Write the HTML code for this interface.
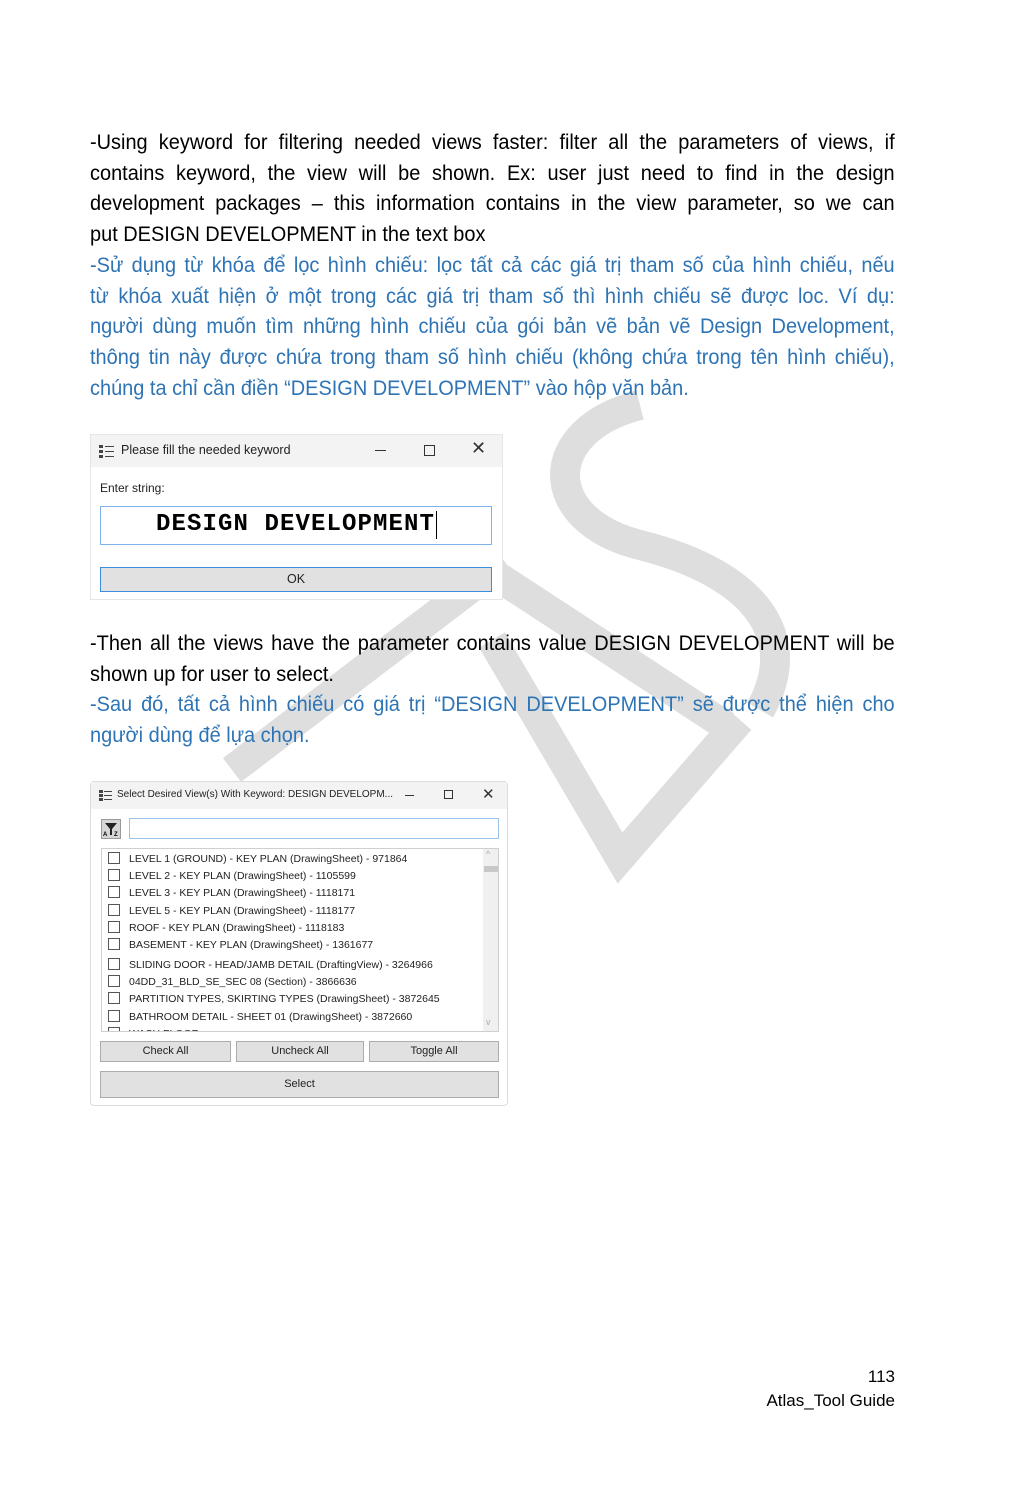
<!DOCTYPE html>
<html><head><meta charset="utf-8"><style>
*{margin:0;padding:0;box-sizing:border-box}
body{width:1021px;height:1499px;background:#fff;position:relative;overflow:hidden;font-family:"Liberation Sans",sans-serif;color:#000}
.wm{position:absolute;left:0;top:0;z-index:0}
.p{position:absolute;left:90px;width:847px;transform:scaleX(0.95);transform-origin:0 0;font-size:21px;line-height:30.7px;z-index:2}
.p div{text-align:justify;text-align-last:justify}
.p div.l{text-align-last:left}
.b{color:#2e74b5}
.dlg{position:absolute;background:#fff;z-index:1;border:1px solid #d8d8d8;font-size:12px;color:#222}
.tb{position:absolute;left:0;right:0;top:0;background:#f3f3f3}
.ab{position:absolute}
.btn{position:absolute;background:#e1e1e1;border:1px solid #adadad;text-align:center;font-size:11px;color:#222}
.row{position:absolute;left:6px;font-size:10.5px;white-space:nowrap;color:#222}
.row i{display:inline-block;width:12px;height:12px;border:1px solid #555;vertical-align:-2px;margin-right:9px;background:#fff}
</style></head><body>
<svg class="wm" width="1021" height="1499">
<g stroke="#dedede" stroke-width="30" fill="none" stroke-linecap="butt">
<path d="M232 770 L505 562"/>
<path d="M500 578 L726 726"/>
<path d="M492 640 L620 858 L740 720"/>
<path d="M640 405 C540 430 540 520 640 545 C760 575 800 640 760 710"/>
</g>
</svg>

<div class="p" style="top:128px">
<div>-Using keyword for filtering needed views faster: filter all the parameters of views, if</div>
<div>contains keyword, the view will be shown. Ex: user just need to find in the design</div>
<div>development packages – this information contains in the view parameter, so we can</div>
<div class="l">put DESIGN DEVELOPMENT in the text box</div>
<div class="b">-Sử dụng từ khóa để lọc hình chiếu: lọc tất cả các giá trị tham số của hình chiếu, nếu</div>
<div class="b">từ khóa xuất hiện ở một trong các giá trị tham số thì hình chiếu sẽ được loc. Ví dụ:</div>
<div class="b">người dùng muốn tìm những hình chiếu của gói bản vẽ bản vẽ Design Development,</div>
<div class="b">thông tin này được chứa trong tham số hình chiếu (không chứa trong tên hình chiếu),</div>
<div class="b l">chúng ta chỉ cần điền “DESIGN DEVELOPMENT” vào hộp văn bản.</div>
</div>

<div class="p" style="top:629px">
<div>-Then all the views have the parameter contains value DESIGN DEVELOPMENT will be</div>
<div class="l">shown up for user to select.</div>
<div class="b">-Sau đó, tất cả hình chiếu có giá trị “DESIGN DEVELOPMENT” sẽ được thể hiện cho</div>
<div class="b l">người dùng để lựa chọn.</div>
</div>

<!-- dialog 1 -->
<div class="dlg" style="left:90px;top:434px;width:413px;height:166px;border-color:#e6e6e6">
<div class="tb" style="height:32px"></div>
<svg class="ab" style="left:8px;top:9px" width="16" height="14"><g fill="#444"><rect x="0" y="1" width="4" height="3"/><rect x="0" y="6" width="4" height="3"/><rect x="0" y="11" width="4" height="3"/><rect x="6" y="2" width="9" height="1"/><rect x="6" y="7" width="9" height="1"/><rect x="6" y="12" width="9" height="1"/></g></svg>
<div class="ab" style="left:30px;top:8px;font-size:12.5px">Please fill the needed keyword</div>
<div class="ab" style="left:284px;top:15px;width:11px;height:1px;background:#333"></div>
<div class="ab" style="left:333px;top:10px;width:11px;height:11px;border:1px solid #333"></div>
<div class="ab" style="left:380px;top:3px;font-size:18px;color:#333">✕</div>
<div class="ab" style="left:9px;top:46px;font-size:12px">Enter string:</div>
<div class="ab" style="left:9px;top:71px;width:392px;height:39px;border:1px solid #7eb4ea"></div>
<div class="ab" style="left:65px;top:76px;font-family:'Liberation Mono',monospace;font-weight:bold;font-size:24px;color:#000;letter-spacing:1.1px;white-space:nowrap">DESIGN DEVELOPMENT</div>
<div class="ab" style="left:345px;top:76px;width:1px;height:28px;background:#000"></div>
<div class="btn" style="left:9px;top:132px;width:392px;height:25px;border:1px solid #3c8ce0;line-height:23px;font-size:12.5px">OK</div>
</div>

<!-- dialog 2 -->
<div class="dlg" style="left:90px;top:781px;width:418px;height:325px;border-color:#dcdcdc;border-radius:4px">
<div class="tb" style="height:27px"></div>
<svg class="ab" style="left:8px;top:7px" width="14" height="13"><g fill="#444"><rect x="0" y="1" width="4" height="3"/><rect x="0" y="5" width="4" height="3"/><rect x="0" y="9" width="4" height="3"/><rect x="5" y="2" width="8" height="1"/><rect x="5" y="6" width="8" height="1"/><rect x="5" y="10" width="8" height="1"/></g></svg>
<div class="ab" style="left:26px;top:7px;font-size:10px;white-space:nowrap">Select Desired View(s) With Keyword: DESIGN DEVELOPM...</div>
<div class="ab" style="left:314px;top:13px;width:9px;height:1px;background:#333"></div>
<div class="ab" style="left:353px;top:8px;width:9px;height:9px;border:1px solid #333"></div>
<div class="ab" style="left:391px;top:3px;font-size:15px;color:#333">✕</div>
<div class="ab" style="left:10px;top:37px;width:20px;height:20px;background:#d6d6d6;border:1px solid #999"></div>
<svg class="ab" style="left:12px;top:39px" width="16" height="16"><path d="M2 2 L14 2 L9 8 L9 14 L7 14 L7 8 Z" fill="#222"/><text x="0" y="15" font-size="6" font-family="Liberation Sans" font-weight="bold">A</text><text x="11" y="15" font-size="6" font-family="Liberation Sans" font-weight="bold">Z</text></svg>
<div class="ab" style="left:38px;top:36px;width:370px;height:21px;border:1px solid #9cc3ea"></div>
<div class="ab" style="left:10px;top:66px;width:398px;height:184px;border:1px solid #cfcfcf;overflow:hidden">
<div class="ab" style="left:381px;top:0;width:16px;height:183px;background:#f0f0f0"></div>
<div class="ab" style="left:382px;top:17px;width:14px;height:6px;background:#c8c8c8"></div>
<div class="ab" style="left:384px;top:0;font-size:9px;color:#aaa">^</div>
<div class="ab" style="left:384px;top:168px;font-size:9px;color:#aaa">v</div>
<div class="row" style="top:3px"><i></i>LEVEL 1 (GROUND) - KEY PLAN (DrawingSheet) - 971864</div>
<div class="row" style="top:20px"><i></i>LEVEL 2 - KEY PLAN (DrawingSheet) - 1105599</div>
<div class="row" style="top:37px"><i></i>LEVEL 3 - KEY PLAN (DrawingSheet) - 1118171</div>
<div class="row" style="top:55px"><i></i>LEVEL 5 - KEY PLAN (DrawingSheet) - 1118177</div>
<div class="row" style="top:72px"><i></i>ROOF - KEY PLAN (DrawingSheet) - 1118183</div>
<div class="row" style="top:89px"><i></i>BASEMENT - KEY PLAN (DrawingSheet) - 1361677</div>
<div class="row" style="top:109px"><i></i>SLIDING DOOR - HEAD/JAMB DETAIL (DraftingView) - 3264966</div>
<div class="row" style="top:126px"><i></i>04DD_31_BLD_SE_SEC 08 (Section) - 3866636</div>
<div class="row" style="top:143px"><i></i>PARTITION TYPES, SKIRTING TYPES (DrawingSheet) - 3872645</div>
<div class="row" style="top:161px"><i></i>BATHROOM DETAIL - SHEET 01 (DrawingSheet) - 3872660</div>
<div class="row" style="top:178px"><i></i>WASH FLOOR</div>
</div>
<div class="btn" style="left:9px;top:259px;width:131px;height:21px;line-height:19px">Check All</div>
<div class="btn" style="left:145px;top:259px;width:128px;height:21px;line-height:19px">Uncheck All</div>
<div class="btn" style="left:278px;top:259px;width:130px;height:21px;line-height:19px">Toggle All</div>
<div class="btn" style="left:9px;top:289px;width:399px;height:27px;line-height:25px">Select</div>
</div>

<div class="ab" style="right:126px;top:1367px;font-size:17px;z-index:2">113</div>
<div class="ab" style="right:126px;top:1391px;font-size:17px;z-index:2">Atlas_Tool Guide</div>
</body></html>
